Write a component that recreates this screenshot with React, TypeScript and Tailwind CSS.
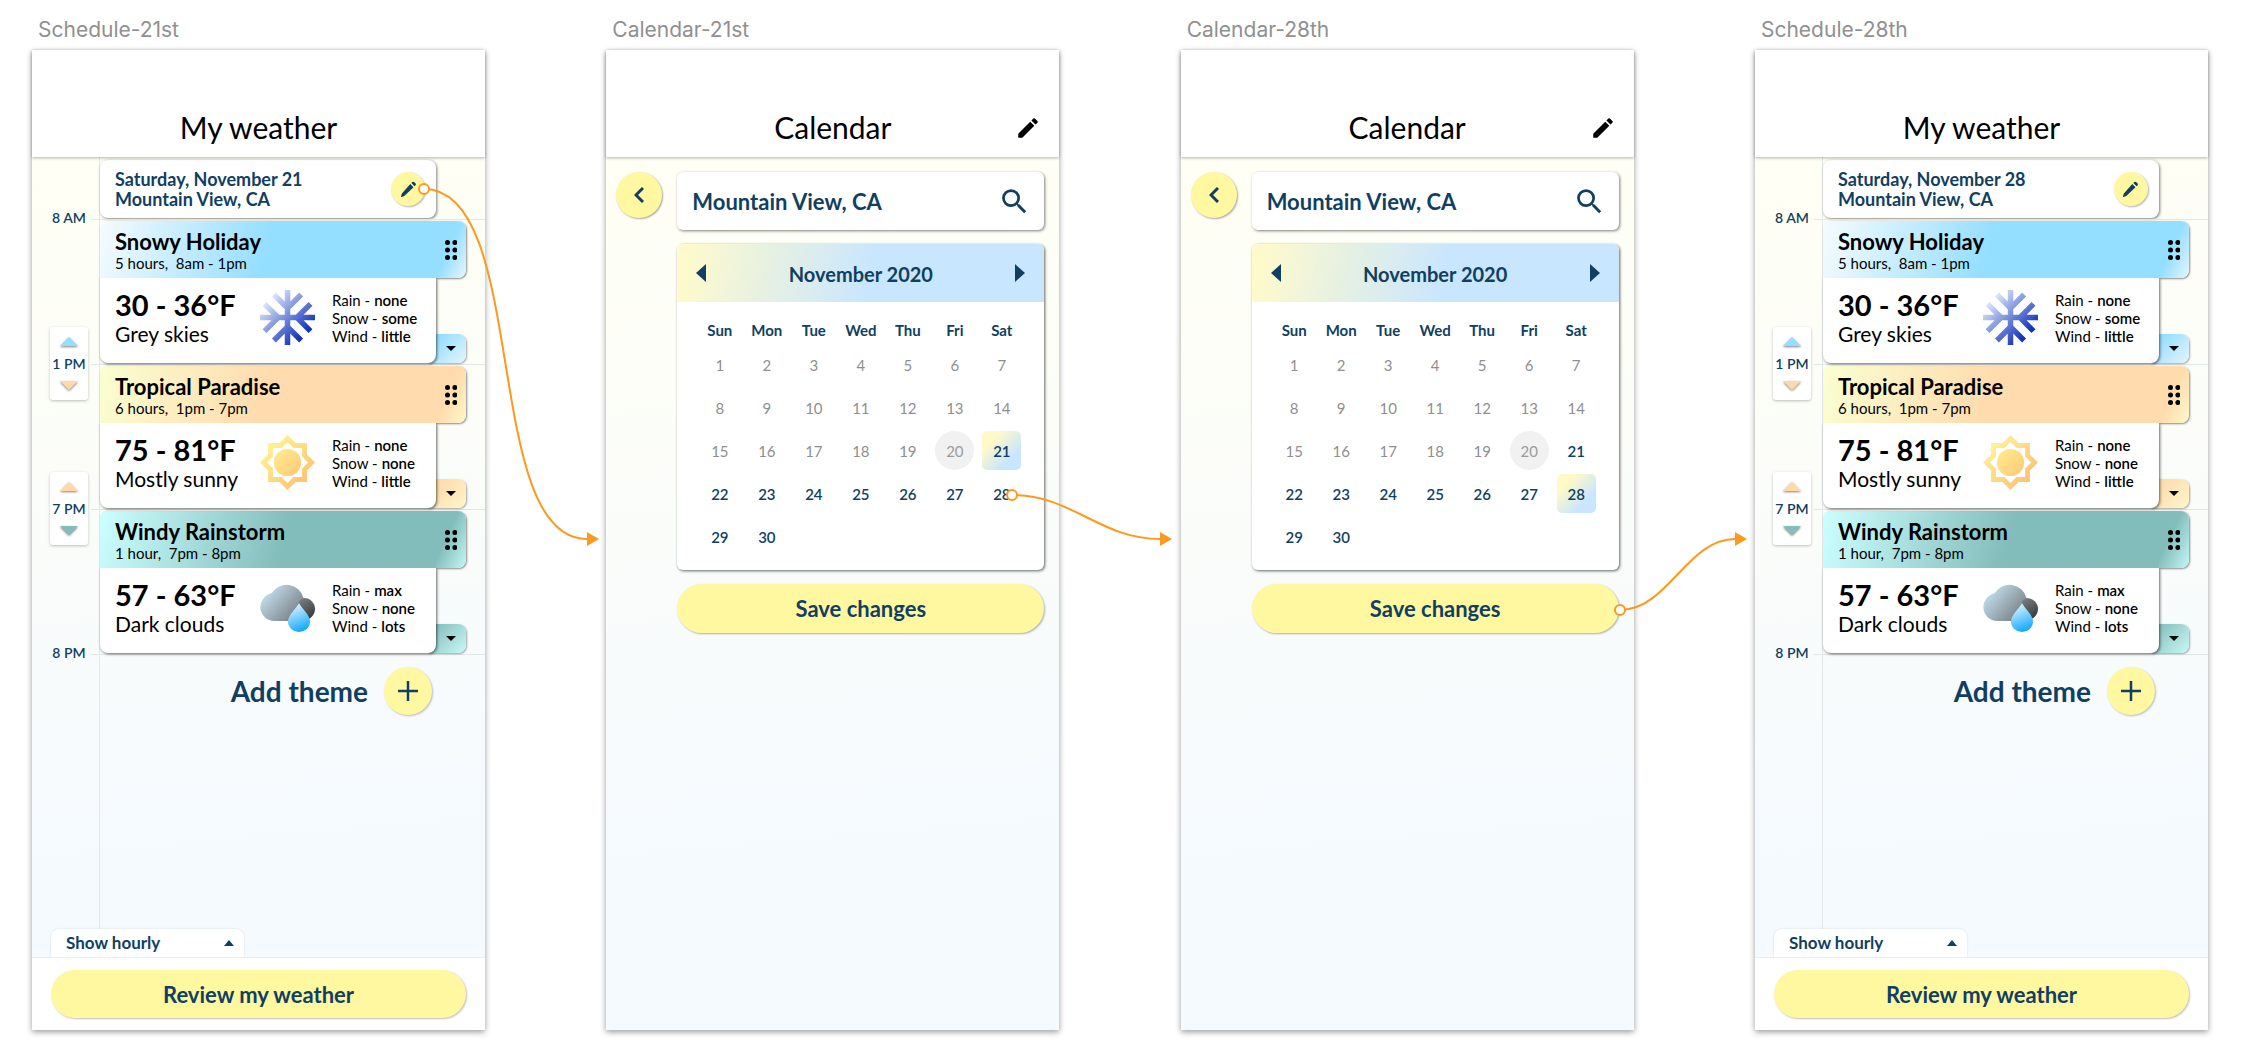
import { useId } from "react";
import { MdEdit, MdSearch } from "react-icons/md";

type IconKind = "snow" | "sun" | "rain";

interface Theme {
  title: string;
  time: string;
  temp: string;
  sky: string;
  icon: IconKind;
  stats: [string, string][];
  bar: string;
  handle: string;
  tab: string;
}

const THEMES: Theme[] = [
  {
    title: "Snowy Holiday",
    time: "5 hours,\u00a0 8am - 1pm",
    temp: "30 - 36°F",
    sky: "Grey skies",
    icon: "snow",
    stats: [["Rain", "none"], ["Snow", "some"], ["Wind", "little"]],
    bar: "bg-[linear-gradient(105deg,#f6fbff_0%,#94deff_50%)]",
    handle: "bg-[linear-gradient(115deg,#94deff_45%,#e6f6ff_100%)]",
    tab: "bg-[linear-gradient(135deg,#94deff_20%,#e0f4ff_95%)]",
  },
  {
    title: "Tropical Paradise",
    time: "6 hours,\u00a0 1pm - 7pm",
    temp: "75 - 81°F",
    sky: "Mostly sunny",
    icon: "sun",
    stats: [["Rain", "none"], ["Snow", "none"], ["Wind", "little"]],
    bar: "bg-[linear-gradient(105deg,#faffd2_0%,#ffdbad_50%)]",
    handle: "bg-[linear-gradient(115deg,#ffdbad_45%,#fdf8c8_100%)]",
    tab: "bg-[linear-gradient(135deg,#ffdbad_20%,#fcf5c6_95%)]",
  },
  {
    title: "Windy Rainstorm",
    time: "1 hour,\u00a0 7pm - 8pm",
    temp: "57 - 63°F",
    sky: "Dark clouds",
    icon: "rain",
    stats: [["Rain", "max"], ["Snow", "none"], ["Wind", "lots"]],
    bar: "bg-[linear-gradient(105deg,#ccffff_0%,#83bdbb_55%)]",
    handle: "bg-[linear-gradient(115deg,#83bdbb_40%,#c4f7f5_100%)]",
    tab: "bg-[linear-gradient(135deg,#83bdbb_10%,#c4f5f3_95%)]",
  },
];

function WeatherIcon({ kind }: { kind: IconKind }) {
  const id = useId();
  if (kind === "snow") {
    return (
      <svg width="55" height="55" viewBox="2 2 20 20" aria-hidden="true">
        <defs>
          <linearGradient id={id} x1="2" y1="2" x2="22" y2="22" gradientUnits="userSpaceOnUse">
            <stop offset="0.15" stopColor="#e2ebfd" />
            <stop offset="0.8" stopColor="#1233bb" />
          </linearGradient>
        </defs>
        <path
          fill={`url(#${id})`}
          d="M22 11h-4.17l3.24-3.24-1.41-1.42L15 11h-2V9l4.66-4.66-1.42-1.41L13 6.17V2h-2v4.17L7.76 2.93 6.34 4.34 11 9v2H9L4.34 6.34 2.93 7.76 6.17 11H2v2h4.17l-3.24 3.24 1.41 1.42L9 13h2v2l-4.66 4.66 1.42 1.41L11 17.83V22h2v-4.17l3.24 3.24 1.42-1.41L13 15v-2h2l4.66 4.66 1.41-1.42L17.83 13H22z"
        />
      </svg>
    );
  }
  if (kind === "sun") {
    return (
      <svg width="55" height="55" viewBox="0.69 0.69 22.62 22.62" aria-hidden="true">
        <defs>
          <linearGradient id={id} x1="3" y1="3" x2="21" y2="21" gradientUnits="userSpaceOnUse">
            <stop offset="0" stopColor="#fff796" />
            <stop offset="1" stopColor="#ffbe70" />
          </linearGradient>
        </defs>
        <path
          fill={`url(#${id})`}
          d="M20 8.69V4h-4.69L12 .69 8.69 4H4v4.69L.69 12 4 15.31V20h4.69L12 23.31 15.31 20H20v-4.69L23.31 12 20 8.69zm-2 5.79V18h-3.52L12 20.48 9.52 18H6v-3.52L3.52 12 6 9.52V6h3.52L12 3.52 14.48 6H18v3.52L20.48 12 18 14.48z"
        />
        <circle cx="12" cy="12" r="5.6" fill={`url(#${id})`} />
      </svg>
    );
  }
  return (
    <svg width="55" height="48" viewBox="0 0 55 48" aria-hidden="true">
      <defs>
        <linearGradient id={`${id}a`} x1="6" y1="6" x2="42" y2="38" gradientUnits="userSpaceOnUse">
          <stop offset="0" stopColor="#c3e0ee" />
          <stop offset="1" stopColor="#6c6f73" />
        </linearGradient>
        <linearGradient id={`${id}b`} x1="40" y1="14" x2="54" y2="36" gradientUnits="userSpaceOnUse">
          <stop offset="0" stopColor="#7d8184" />
          <stop offset="1" stopColor="#303030" />
        </linearGradient>
        <linearGradient id={`${id}c`} x1="32" y1="20" x2="44" y2="48" gradientUnits="userSpaceOnUse">
          <stop offset="0" stopColor="#e2f6ff" />
          <stop offset="1" stopColor="#08a4fc" />
        </linearGradient>
      </defs>
      <circle cx="44" cy="25" r="11" fill={`url(#${id}b)`} />
      <path
        fill={`url(#${id}a)`}
        d="M14 37A14 14 0 0 1 11.500 9.300A17.500 17.500 0 0 1 43.500 14Q39 16 38 20L32 37Z"
      />
      <path fill={`url(#${id}c)`} d="M39 19C42 25 50 31 50 37.500A11 10.500 0 0 1 28 37.500C28 31 36 25 39 19Z" />
    </svg>
  );
}

function Triangle({ dir, fill }: { dir: "up" | "down"; fill: string }) {
  return (
    <svg
      width="18"
      height="9"
      viewBox="0 0 18 9"
      className="drop-shadow-[0_1px_1px_rgba(0,0,0,0.5)]"
      aria-hidden="true"
    >
      <path fill={fill} d={dir === "up" ? "M0 9L9 0L18 9Z" : "M0 0L9 9L18 0Z"} />
    </svg>
  );
}

function Stepper({ label, up, down }: { label: string; up: string; down: string }) {
  return (
    <div className="flex h-[73px] w-[38px] flex-col items-center justify-between rounded-[3px] bg-white py-2.5 shadow-[0_1px_3px_rgba(0,0,0,0.25)]">
      <button type="button" aria-label={`Move ${label} earlier`} className="flex">
        <Triangle dir="up" fill={up} />
      </button>
      <span>{label}</span>
      <button type="button" aria-label={`Move ${label} later`} className="flex">
        <Triangle dir="down" fill={down} />
      </button>
    </div>
  );
}

interface Wire {
  x: number;
  y: number;
  endX: number;
  endY: number;
  bend: number;
}

function Connector({ x, y, endX, endY, bend }: Wire) {
  return (
    <svg
      className="pointer-events-none absolute top-0 left-0 z-20 overflow-visible"
      width="1"
      height="1"
      aria-hidden="true"
    >
      <path
        d={`M${x} ${y}C${x + bend} ${y} ${endX - bend} ${endY} ${endX} ${endY}`}
        fill="none"
        stroke="#fb9a1e"
        strokeWidth="2"
      />
      <path d={`M${endX} ${endY - 7}L${endX + 12} ${endY}L${endX} ${endY + 7}Z`} fill="#fb9a1e" />
      <circle cx={x} cy={y} r="5" fill="#fff" stroke="#fb9a1e" strokeWidth="2" />
    </svg>
  );
}

function Artboard({
  name,
  title,
  editable = false,
  wire,
  children,
}: {
  name: string;
  title: string;
  editable?: boolean;
  wire?: Wire;
  children: React.ReactNode;
}) {
  return (
    <section className="w-[453px] shrink-0">
      <h2 className="mb-1.5 pl-1.5 font-['Inter',sans-serif] text-[21px] leading-7 text-[#909090]">{name}</h2>
      <div className="relative flex min-h-[980px] flex-col bg-[linear-gradient(175deg,#fffff4_10%,#fafcfa_50%,#f5faff_80%)] shadow-[0_2px_6px_rgba(0,0,0,0.4)]">
        <header className="relative z-10 grid h-[107px] grid-cols-[1fr_auto_1fr] items-end bg-white px-[18px] pb-3 shadow-[0_1px_3px_rgba(0,0,0,0.3)]">
          <h1 className="col-start-2 text-[30px] leading-9">{title}</h1>
          {editable && (
            <button type="button" aria-label="Edit" className="mb-1 justify-self-end">
              <MdEdit size={26} />
            </button>
          )}
        </header>
        {children}
        {wire && <Connector {...wire} />}
      </div>
    </section>
  );
}

function HourLine() {
  return <hr className="my-px -ml-[9px] h-px border-0 bg-[#e2e6e7]" />;
}

function ThemeBlock({ theme }: { theme: Theme }) {
  return (
    <article className="mr-[19px]">
      <div className="relative flex h-[57px] rounded-tl-md rounded-r-lg shadow-[1px_1px_2px_rgba(0,0,0,0.45)]">
        <div className={`flex flex-1 flex-col justify-center rounded-tl-md pl-[15px] ${theme.bar}`}>
          <h3 className="text-[22px] leading-[26px] font-bold">{theme.title}</h3>
          <p className="text-[15px] leading-4">{theme.time}</p>
        </div>
        <button
          type="button"
          aria-label={`Drag ${theme.title}`}
          className={`flex w-[30px] items-center justify-center rounded-r-lg ${theme.handle}`}
        >
          <svg width="12" height="20" viewBox="0 0 12 20" aria-hidden="true">
            {[2.5, 10, 17.5].map((cy) => (
              <g key={cy}>
                <circle cx="2.500" cy={cy} r="2.500" />
                <circle cx="9.900" cy={cy} r="2.500" />
              </g>
            ))}
          </svg>
        </button>
      </div>
      <div className="flex h-[85px]">
        <div className="relative z-10 grid flex-1 grid-cols-[145px_72px_1fr] items-center rounded-b-lg bg-white pb-1.5 pl-[15px] shadow-[1px_1px_3px_rgba(0,0,0,0.6)] [clip-path:inset(0_-4px_-4px_-4px)]">
          <div>
            <p className="text-[29px] leading-8 font-bold">{theme.temp}</p>
            <p className="text-[21px] leading-[26px]">{theme.sky}</p>
          </div>
          <WeatherIcon kind={theme.icon} />
          <dl className="text-[15px] leading-[18px]">
            {theme.stats.map(([k, v]) => (
              <div key={k} className="flex gap-1">
                <dt>{k} -</dt>
                <dd className="font-semibold">{v}</dd>
              </div>
            ))}
          </dl>
        </div>
        <button
          type="button"
          aria-label={`Expand ${theme.title}`}
          className={`-ml-2 flex h-[29px] w-[38px] items-center justify-center self-end rounded-r-lg pl-2 shadow-[1px_1px_2px_rgba(0,0,0,0.35)] ${theme.tab}`}
        >
          <svg width="10" height="5" viewBox="0 0 10 5" aria-hidden="true">
            <path d="M0 0H10L5 5Z" />
          </svg>
        </button>
      </div>
    </article>
  );
}

function Schedule({ name, date, wire }: { name: string; date: string; wire?: Wire }) {
  return (
    <Artboard name={name} title="My weather" wire={wire}>
      <div className="flex flex-1">
        <div className="flex w-[67px] flex-col items-end pt-[51px] pr-[11px] text-center text-[14px] leading-5 font-semibold text-[#103f62]">
          <span className="mb-[99px] w-[38px]">8 AM</span>
          <Stepper label="1 PM" up="#94deff" down="#ffd9a8" />
          <div className="h-[72px]" />
          <Stepper label="7 PM" up="#ffd9a8" down="#83bdbb" />
          <span className="mt-[98px] w-[38px]">8 PM</span>
        </div>
        <div className="flex-1 border-l border-[#e4e8e9] pt-[3px]">
          <div className="mr-[49px] flex h-[58px] items-center justify-between rounded-lg bg-white pr-[11px] pl-[15px] text-[18px] leading-5 font-bold text-[#103f62] shadow-[1px_1px_3px_rgba(0,0,0,0.5)]">
            <p>
              {date}
              <br />
              Mountain View, CA
            </p>
            <button
              type="button"
              aria-label="Edit date and location"
              className="flex size-[34px] items-center justify-center rounded-full bg-[#fff8a1] shadow-[1px_1px_2px_rgba(0,0,0,0.3)]"
            >
              <svg width="17" height="17" viewBox="0 0 18 18" fill="#103f62" aria-hidden="true">
                <path d="M10.900 3.300L14.300 6.700L5.400 15.200Q4.500 16.100 3.200 16.500L1.800 16.900Q.8 17.200 1.100 16.200L1.500 14.800Q1.800 13.400 2.700 12.500Z" />
                <path d="M12 2.200L13.200 1.100Q14.200 .2 15.200 1.200L16.400 2.400Q17.400 3.400 16.500 4.400L15.400 5.600Z" />
              </svg>
            </button>
          </div>
          {THEMES.map((t) => (
            <div key={t.title}>
              <HourLine />
              <ThemeBlock theme={t} />
            </div>
          ))}
          <HourLine />
          <button
            type="button"
            className="mt-3 mr-[53px] ml-auto flex items-center gap-4 text-[28px] leading-8 font-bold text-[#103f62]"
          >
            Add theme
            <span className="flex size-12 items-center justify-center rounded-full bg-[#fff8a1] shadow-[1px_1px_2px_rgba(0,0,0,0.25)]">
              <svg width="20" height="20" viewBox="0 0 20 20" stroke="#103f62" strokeWidth="2.500" aria-hidden="true">
                <path d="M10 0V20M0 10H20" />
              </svg>
            </span>
          </button>
        </div>
      </div>
      <button
        type="button"
        className="ml-[19px] flex h-7 w-[193px] items-center justify-between rounded-t-lg bg-white pr-2.5 pl-[15px] text-[17px] font-bold text-[#103f62] shadow-[0_0_2px_rgba(0,0,0,0.15)]"
      >
        Show hourly
        <svg width="10" height="6" viewBox="0 0 10 6" fill="#103f62" aria-hidden="true">
          <path d="M0 6H10L5 0Z" />
        </svg>
      </button>
      <footer className="border-t border-[#e6eef2] bg-white px-[19px] py-3">
        <button
          type="button"
          className="h-12 w-full rounded-full bg-[#fff8a1] text-[22px] font-bold text-[#103f62] shadow-[1px_1px_2px_rgba(0,0,0,0.25)]"
        >
          Review my weather
        </button>
      </footer>
    </Artboard>
  );
}

const WEEKDAYS = ["Sun", "Mon", "Tue", "Wed", "Thu", "Fri", "Sat"];
const WEEKS = [0, 1, 2, 3, 4].map((w) => [1, 2, 3, 4, 5, 6, 7].map((d) => w * 7 + d));

function dayStyle(day: number, selected: number) {
  if (day === selected)
    return "rounded-[5px] bg-[linear-gradient(135deg,#fff9c8_25%,#c9e6ff_72%)] font-semibold text-[#103f62]";
  if (day === 20) return "rounded-full bg-[#f1f1f1] text-[#9b9b9b]";
  return day < 20 ? "text-[#8f8f8f]" : "font-semibold text-[#103f62]";
}

function Calendar({ name, selected, wire }: { name: string; selected: number; wire: Wire }) {
  return (
    <Artboard name={name} title="Calendar" editable wire={wire}>
      <div className="flex flex-1 items-start gap-[15px] pt-[15px] pr-[15px] pl-2.5 text-[#103f62]">
        <button
          type="button"
          aria-label="Back"
          className="flex size-[46px] shrink-0 items-center justify-center rounded-full bg-[#fff8a1] shadow-[1px_1px_2px_rgba(0,0,0,0.35)]"
        >
          <svg width="10" height="16" viewBox="0 0 10 16" fill="none" stroke="#103f62" strokeWidth="3" aria-hidden="true">
            <path d="M9 1L2 8L9 15" />
          </svg>
        </button>
        <div className="flex flex-1 flex-col gap-3.5">
          <label className="flex h-[58px] items-center rounded-md bg-white pr-[13px] pl-[15px] shadow-[1px_1px_3px_rgba(0,0,0,0.5)]">
            <input
              aria-label="Location"
              defaultValue="Mountain View, CA"
              className="w-full min-w-0 flex-1 bg-transparent text-[22px] font-bold outline-none"
            />
            <MdSearch size={33} className="shrink-0" />
          </label>
          <div className="overflow-hidden rounded-md bg-white pb-3 shadow-[1px_1px_3px_rgba(0,0,0,0.6)]">
            <div className="flex h-[58px] items-center justify-between bg-[linear-gradient(100deg,#fffacb_2%,#c9e6ff_53%)] px-[19px]">
              <button type="button" aria-label="Previous month">
                <svg width="10" height="18" viewBox="0 0 10 18" fill="#103f62" aria-hidden="true">
                  <path d="M10 0V18L0 9Z" />
                </svg>
              </button>
              <h3 className="pt-0.5 text-[20px] leading-7 font-bold">November 2020</h3>
              <button type="button" aria-label="Next month">
                <svg width="10" height="18" viewBox="0 0 10 18" fill="#103f62" aria-hidden="true">
                  <path d="M0 0V18L10 9Z" />
                </svg>
              </button>
            </div>
            <div className="px-[19px] pt-[15px]">
              <table className="w-full table-fixed border-collapse text-center text-[15px] leading-5">
                <thead>
                  <tr className="h-[26px]">
                    {WEEKDAYS.map((d) => (
                      <th key={d} scope="col" className="p-0 font-bold">
                        {d}
                      </th>
                    ))}
                  </tr>
                </thead>
                <tbody>
                  {WEEKS.map((week) => (
                    <tr key={week[0]} className="h-[43px]">
                      {week.map((day) => (
                        <td key={day} className="p-0">
                          {day <= 30 && (
                            <button
                              type="button"
                              className={`mx-auto flex size-[39px] items-center justify-center ${dayStyle(day, selected)}`}
                            >
                              {day}
                            </button>
                          )}
                        </td>
                      ))}
                    </tr>
                  ))}
                </tbody>
              </table>
            </div>
          </div>
          <button
            type="button"
            className="h-[49px] w-full rounded-full bg-[#fff8a1] text-[22px] font-bold shadow-[1px_1px_2px_rgba(0,0,0,0.3)]"
          >
            Save changes
          </button>
        </div>
      </div>
    </Artboard>
  );
}

export default function App() {
  return (
    <main className="flex min-h-screen items-start justify-between gap-8 bg-white pt-4 pr-9 pb-8 pl-8 font-['Lato',sans-serif] text-black">
      <Schedule
        name="Schedule-21st"
        date="Saturday, November 21"
        wire={{ x: 392, y: 139, endX: 555, endY: 489, bend: 106 }}
      />
      <Calendar name="Calendar-21st" selected={21} wire={{ x: 406, y: 445, endX: 554, endY: 489, bend: 60 }} />
      <Calendar name="Calendar-28th" selected={28} wire={{ x: 439, y: 560, endX: 554, endY: 489, bend: 48 }} />
      <Schedule name="Schedule-28th" date="Saturday, November 28" />
    </main>
  );
}
